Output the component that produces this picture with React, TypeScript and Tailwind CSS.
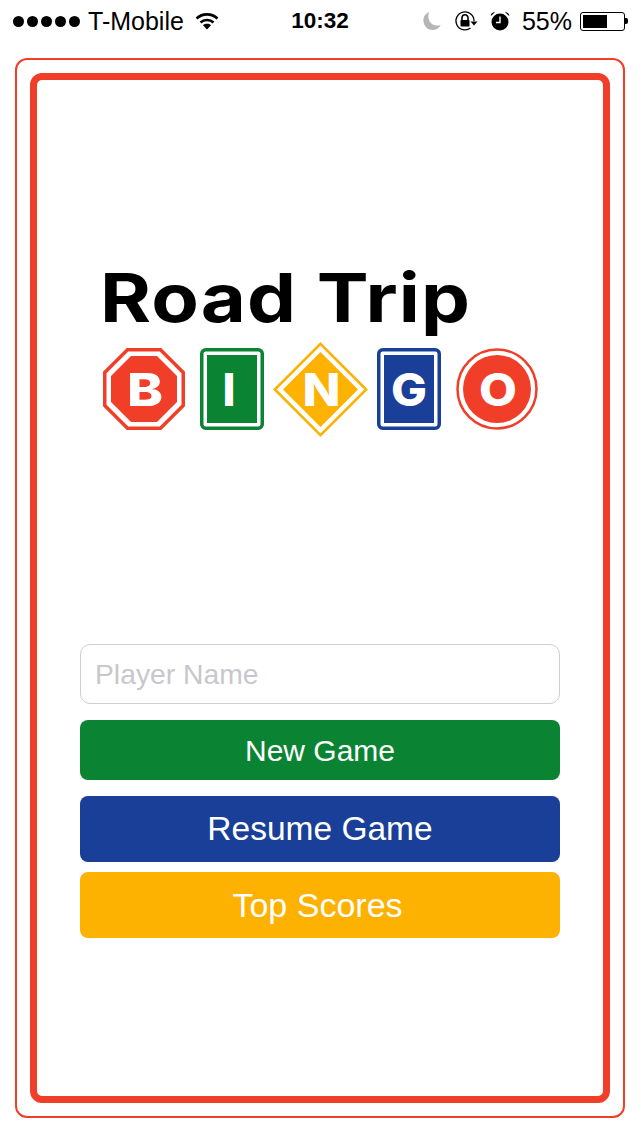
const sans = { fontFamily: '"Liberation Sans", Arial, sans-serif' };

function Wifi() {
  return (
    <svg width="24" height="20" viewBox="0 0 24 20" fill="none" className="ml-[11px]">
      <path d="M1.5 7.5C7.5 2 16.5 2 22.5 7.5" stroke="#000" strokeWidth="2.6" />
      <path d="M5.5 11.5C9 8.2 15 8.2 18.5 11.5" stroke="#000" strokeWidth="2.6" />
      <path d="M8 14.2L12 18.5L16 14.2C13.8 12.4 10.2 12.4 8 14.2Z" fill="#000" />
    </svg>
  );
}

function Moon() {
  return (
    <svg width="20" height="20" viewBox="0 0 20 20">
      <path d="M7 1C3 3 1 6 1.500 10.500C2 15.500 6 19 10.500 19C14 19 17 17 19 14C14 15.500 9.500 14 7.500 10C6 7 6 4 7 1Z" fill="#b6b6b6" />
    </svg>
  );
}

function RotationLock() {
  return (
    <svg width="24" height="20" viewBox="0 0 24 20" fill="none">
      <path d="M20 10A9 9 0 1 0 16.500 17" stroke="#000" strokeWidth="1.300" />
      <path d="M16.500 10.500H23.500L20 14.500Z" fill="#000" />
      <path d="M8 9V6.800A3 3 0 0 1 14 6.800V9" stroke="#000" strokeWidth="1.600" />
      <rect x="6.500" y="9" width="9" height="6.500" rx="0.800" fill="#000" />
    </svg>
  );
}

function Alarm() {
  return (
    <svg width="20" height="20" viewBox="0 0 20 20" fill="none">
      <circle cx="10" cy="11" r="8.500" fill="#000" />
      <path d="M10 5.500V11.500H6" stroke="#fff" strokeWidth="1.400" />
      <path d="M0.800 5L5 1.200C3 0.800 0.500 2.200 0.800 5Z" fill="#000" />
      <path d="M19.200 5L15 1.200C17 0.800 19.500 2.200 19.200 5Z" fill="#000" />
    </svg>
  );
}

function Battery() {
  return (
    <div className="flex items-center ml-[8px]">
      <div className="w-[45px] h-[19px] border border-black rounded-[3px] p-[2px] flex">
        <div className="w-[24px] bg-black" />
      </div>
      <div className="w-[3px] h-[6px] bg-black rounded-r-[2px]" />
    </div>
  );
}

function StatusBar() {
  return (
    <div className="h-[58px] grid grid-cols-[1fr_auto_1fr] text-black" style={sans}>
      <div className="flex items-center h-[42px] pl-[13px]">
        <div className="flex gap-[3px]">
          {[0, 1, 2, 3, 4].map((i) => (
            <div key={i} className="w-[11px] h-[11px] rounded-full bg-black" />
          ))}
        </div>
        <span className="ml-[8px] text-[25px] leading-none">T-Mobile</span>
        <Wifi />
      </div>
      <div className="h-[42px] flex items-center text-[22.500px] font-bold leading-none">
        10:32
      </div>
      <div className="flex items-center justify-end h-[42px] pr-[12px]">
        <Moon />
        <div className="ml-[12px]"><RotationLock /></div>
        <div className="ml-[12px]"><Alarm /></div>
        <span className="ml-[12px] text-[25px] leading-none">55%</span>
        <Battery />
      </div>
    </div>
  );
}

// sign letters are wide in the logo, so they get stretched with textLength
function SignLetter({ x, y, width, children }: { x: number; y: number; width: number; children: string }) {
  return (
    <text
      x={x}
      y={y}
      textLength={width}
      lengthAdjust="spacingAndGlyphs"
      fill="#fff"
      fontSize="45"
      fontWeight="800"
      fontFamily="Inter, sans-serif"
    >
      {children}
    </text>
  );
}

function Stop() {
  return (
    <svg width="82" height="82" viewBox="0 0 82 82">
      <polygon points="24.500,1.750 57.500,1.750 80.250,24.500 80.250,57.500 57.500,80.250 24.500,80.250 1.750,57.500 1.750,24.500" fill="none" stroke="#f03e28" strokeWidth="3.500" />
      <polygon points="28,8 54,8 74,28 74,54 54,74 28,74 8,54 8,28" fill="#f03e28" />
      <SignLetter x={24} y={57.700} width={36}>B</SignLetter>
    </svg>
  );
}

function Panel({ color, letter, x, width }: { color: string; letter: string; x: number; width: number }) {
  return (
    <svg width="64" height="82" viewBox="0 0 64 82">
      <rect x="1.750" y="1.750" width="60.500" height="78.500" rx="4" fill="none" stroke={color} strokeWidth="3.500" />
      <rect x="7" y="7" width="50" height="68" fill={color} />
      <SignLetter x={x} y={57.700} width={width}>{letter}</SignLetter>
    </svg>
  );
}

function Diamond() {
  return (
    <svg width="95" height="95" viewBox="0 0 95 95">
      <polygon points="47.500,1.800 93.200,47.500 47.500,93.200 1.800,47.500" fill="none" stroke="#fdb100" strokeWidth="2.500" />
      <polygon points="47.500,10 85,47.500 47.500,85 10,47.500" fill="#fdb100" />
      <SignLetter x={29.500} y={64} width={38}>N</SignLetter>
    </svg>
  );
}

function Target() {
  return (
    <svg width="82" height="82" viewBox="0 0 82 82">
      <circle cx="41" cy="41" r="39.500" fill="none" stroke="#f03e28" strokeWidth="2.500" />
      <circle cx="41" cy="41" r="34" fill="#f03e28" />
      <SignLetter x={23} y={57.700} width={38}>O</SignLetter>
    </svg>
  );
}

function MenuButton({ label, className }: { label: string; className: string }) {
  return (
    <button className={`w-full rounded-[8px] text-white flex items-center justify-center leading-none ${className}`}>
      {label}
    </button>
  );
}

export default function App() {
  return (
    <div className="w-[640px] h-[1136px] bg-white overflow-hidden">
      <StatusBar />
      <div className="mx-[15px] h-[1060px] border-2 border-[#f03e28] rounded-[12px] p-[13px]">
        <div className="h-full border-[7px] border-[#f03e28] rounded-[12px] pt-[180px]">
          <h1
            className="ml-[63px] text-[67px] font-bold leading-[76px] tracking-[1px] text-black origin-left scale-x-[1.16] whitespace-nowrap"
            style={{ fontFamily: 'Inter, sans-serif' }}
          >
            Road Trip
          </h1>
          <div className="flex items-center ml-[66px] mt-[5px] h-[96px]">
            <Stop />
            <div className="ml-[15px]"><Panel color="#0a8432" letter="I" x={22.500} width={13} /></div>
            <div className="ml-[9px]"><Diamond /></div>
            <div className="ml-[9px]"><Panel color="#1a3f98" letter="G" x={14} width={36} /></div>
            <div className="ml-[15px]"><Target /></div>
          </div>
          <div className="ml-[43px] w-[480px] mt-[207px]" style={sans}>
            <input
              placeholder="Player Name"
              className="w-full h-[60px] border border-[#cfcfd3] rounded-[10px] px-[14px] text-[28.300px] outline-none placeholder:text-[#c7c7cd]"
            />
            <MenuButton label="New Game" className="h-[60px] mt-[16px] bg-[#0a8432] text-[30px] pt-[1px]" />
            <MenuButton label="Resume Game" className="h-[66px] mt-[16px] bg-[#1a3f98] text-[33.500px]" />
            <MenuButton label="Top Scores" className="h-[66px] mt-[10px] bg-[#fdb100] text-[34px] pr-[5px]" />
          </div>
        </div>
      </div>
    </div>
  );
}
